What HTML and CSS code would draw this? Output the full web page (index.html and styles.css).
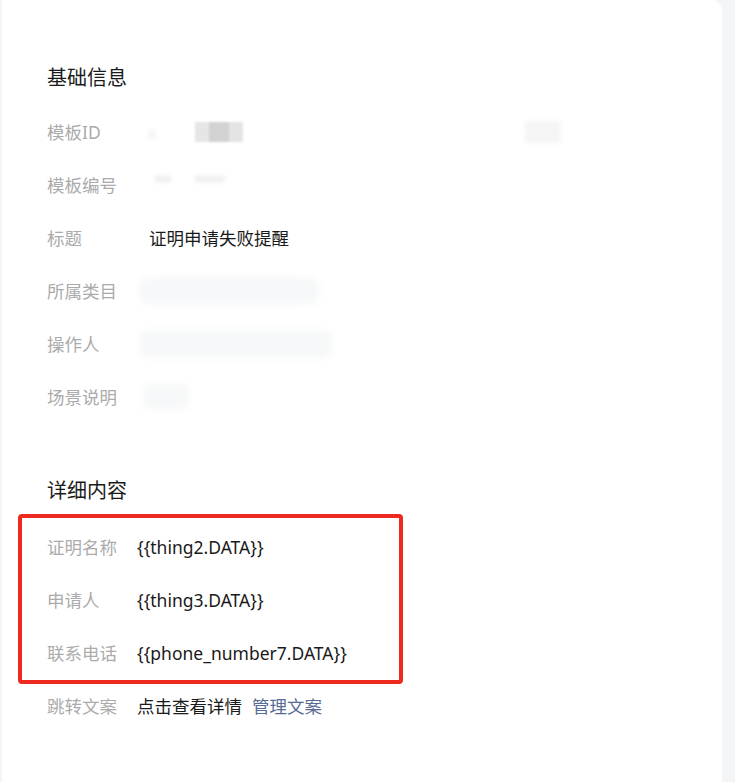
FILE: index.html
```html
<!DOCTYPE html>
<html lang="zh-CN">
<head>
    <meta charset="UTF-8">
    <meta name="viewport" content="width=device-width, initial-scale=1.0">
    <title>模板详情</title>
    <link rel="stylesheet" href="styles.css">
</head>
<body>
    <div class="card">
        <h2 class="section-title first">基础信息</h2>
        <div class="info-list basic">
            <div class="info-row">
                <span class="label">模板ID</span>
                <span class="value">
                    <i class="blur dot-a"></i>
                    <i class="blur mosaic"></i>
                    <i class="blur tail-a"></i>
                </span>
            </div>
            <div class="info-row">
                <span class="label">模板编号</span>
                <span class="value">
                    <i class="blur small-a"></i>
                    <i class="blur small-b"></i>
                </span>
            </div>
            <div class="info-row">
                <span class="label">标题</span>
                <span class="value">证明申请失败提醒</span>
            </div>
            <div class="info-row">
                <span class="label">所属类目</span>
                <span class="value"><i class="blur wide-a"></i></span>
            </div>
            <div class="info-row">
                <span class="label">操作人</span>
                <span class="value"><i class="blur wide-b"></i></span>
            </div>
            <div class="info-row">
                <span class="label">场景说明</span>
                <span class="value"><i class="blur short-a"></i></span>
            </div>
        </div>

        <h2 class="section-title">详细内容</h2>
        <div class="info-list detail">
            <div class="highlight">
                <div class="info-row">
                    <span class="label">证明名称</span>
                    <span class="value">{{thing2.DATA}}</span>
                </div>
                <div class="info-row">
                    <span class="label">申请人</span>
                    <span class="value">{{thing3.DATA}}</span>
                </div>
                <div class="info-row">
                    <span class="label">联系电话</span>
                    <span class="value">{{phone_number7.DATA}}</span>
                </div>
            </div>
            <div class="info-row">
                <span class="label">跳转文案</span>
                <span class="value">点击查看详情<a class="link" href="#">管理文案</a></span>
            </div>
        </div>
    </div>
</body>
</html>
```

FILE: styles.css
```css
body {
    margin: 0;
    padding: 0 13px 0 2px;
    background-color: #f4f5f7;
    font-family: "Noto Sans", "Noto Sans CJK SC", sans-serif;
    color: #1a1a1a;
}

.card {
    background-color: #ffffff;
    border-top-right-radius: 10px;
    min-height: 782px;
    padding: 63px 0 0 45px;
    box-sizing: border-box;
}

.section-title {
    margin: 0 0 14px;
    font-size: 20px;
    font-weight: 400;
    line-height: 30px;
    color: #1a1a1a;
}

.first {
    margin-bottom: 12px;
}

.info-list {
    margin-bottom: 53px;
}

.info-row {
    display: flex;
    align-items: center;
    height: 53px;
    font-size: 17.5px;
}

.label {
    flex: 0 0 auto;
    color: #ababab;
}

.basic .label {
    width: 102px;
}

.detail .label {
    width: 90px;
}

.value {
    display: flex;
    align-items: center;
    color: #1a1a1a;
    white-space: pre;
}

.link {
    margin-left: 10px;
    color: #576b95;
    text-decoration: none;
}

/* 红框标注 */
.highlight {
    position: relative;
}

.highlight::after {
    content: "";
    position: absolute;
    top: -6px;
    left: -29px;
    width: 377px;
    height: 162px;
    border: 4px solid #ee2a20;
    border-radius: 4px;
    pointer-events: none;
}

/* 打码区域 */
.blur {
    display: inline-block;
    background-color: #ececec;
    filter: blur(2px);
}

.dot-a {
    width: 6px;
    height: 8px;
    margin-top: 4px;
    background-color: #f0f0f0;
}

.mosaic {
    width: 48px;
    height: 20px;
    margin-left: 40px;
    background: linear-gradient(90deg, #e6e6e6 0 30%, #d2d2d2 30% 70%, #e4e4e4 70%);
    filter: blur(1px);
}

.tail-a {
    width: 36px;
    height: 22px;
    margin-left: 282px;
    background-color: #f5f5f5;
}

.small-a {
    width: 16px;
    height: 6px;
    margin-top: -12px;
    margin-left: 6px;
    background-color: #eeeeee;
}

.small-b {
    width: 30px;
    height: 6px;
    margin-top: -12px;
    margin-left: 24px;
    background-color: #eeeeee;
}

.wide-a {
    width: 180px;
    height: 28px;
    margin-left: -10px;
    border-radius: 10px;
    background-color: #f7f8f9;
    filter: blur(3px);
}

.wide-b {
    width: 194px;
    height: 28px;
    margin-left: -10px;
    border-radius: 10px;
    background-color: #f7f8f9;
    filter: blur(3px);
}

.short-a {
    width: 46px;
    height: 26px;
    margin-left: -6px;
    border-radius: 8px;
    background-color: #f7f8f9;
    filter: blur(3px);
}
```
